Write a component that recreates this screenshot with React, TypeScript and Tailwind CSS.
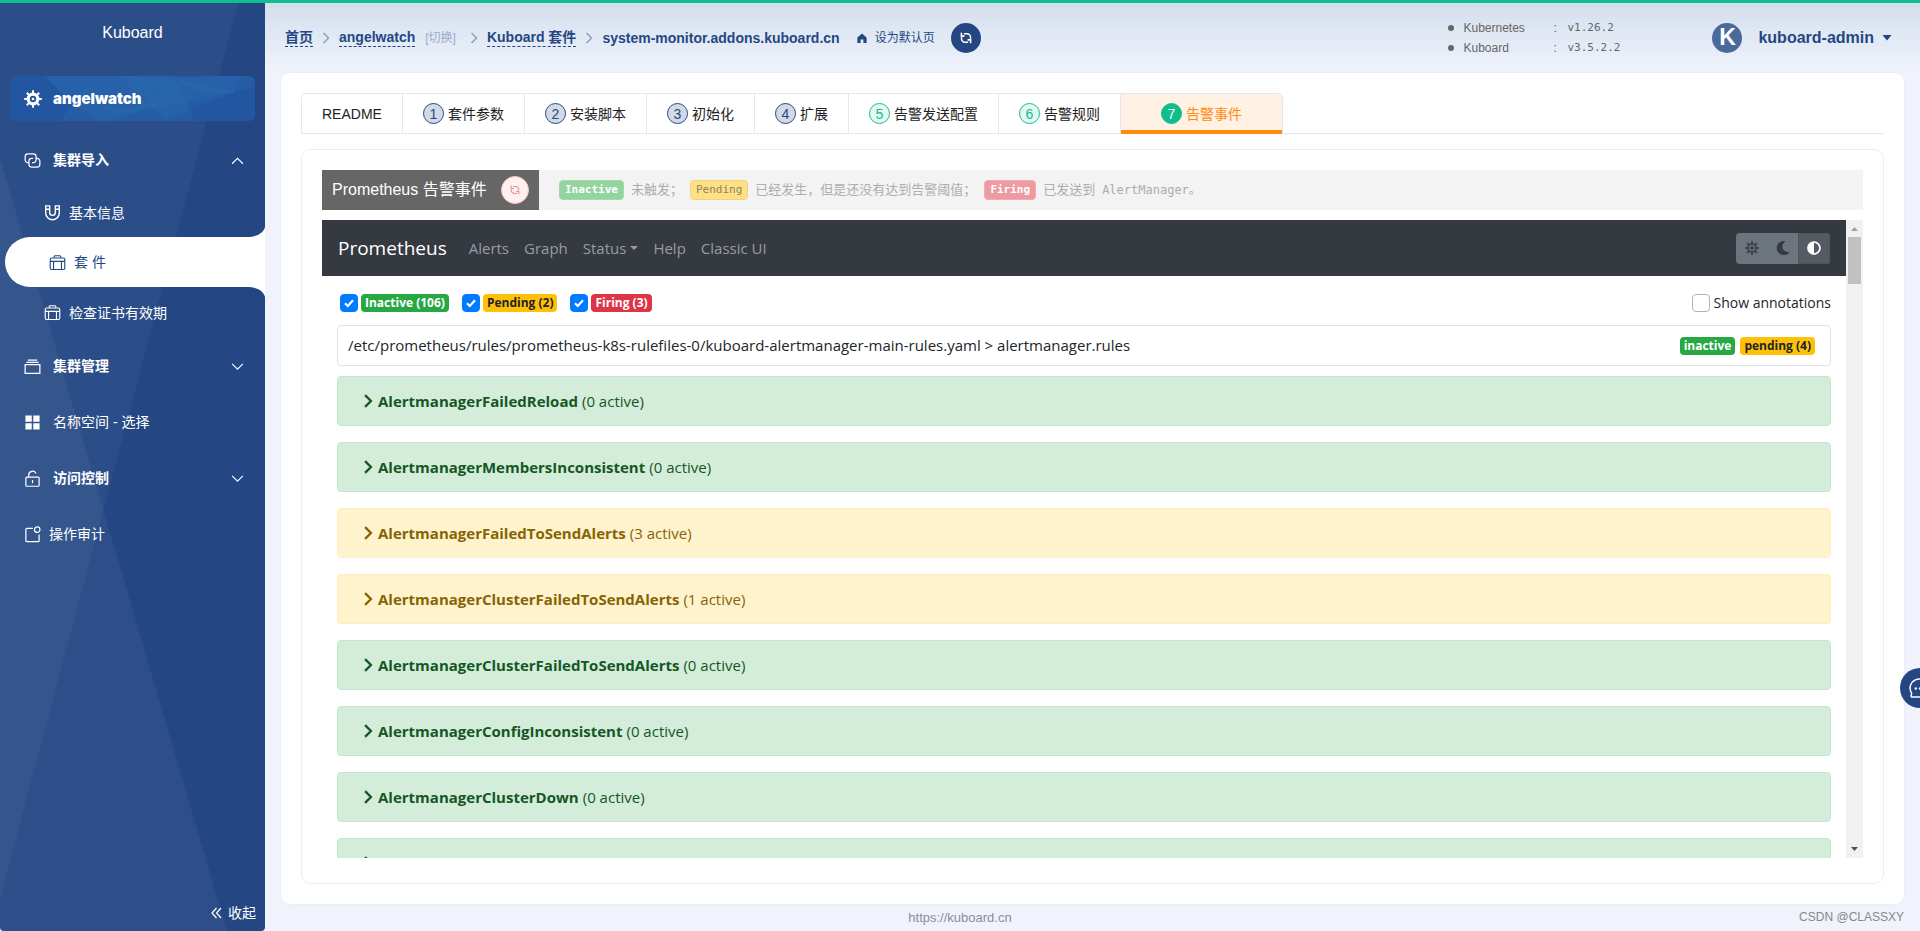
import { useState, type ReactNode } from "react";
import { FaAdjust, FaMoon } from "react-icons/fa";

type IconProps = { className?: string };

function HelmIcon({ className }: IconProps) {
  return (
    <svg viewBox="0 0 18 18" className={className} fill="none" stroke="currentColor">
      <circle cx="9" cy="9" r="4.8" strokeWidth="3.2" />
      <circle cx="9" cy="9" r="1.3" fill="currentColor" stroke="none" />
      <path
        strokeWidth="2"
        d="M9 0.2v4M9 13.8v4M0.2 9h4M13.8 9h4M2.8 2.8l2.4 2.4M12.8 12.8l2.4 2.4M2.8 15.2l2.4-2.4M12.8 5.2l2.4-2.4"
      />
    </svg>
  );
}

function ConnectionIcon({ className }: IconProps) {
  return (
    <svg viewBox="0 0 18 18" className={className} fill="none" stroke="currentColor" strokeWidth="1.3">
      <path d="M5.500 11.300H4.200A3 3 0 0 1 1.200 8.300V5a3 3 0 0 1 3-3h5.600a3 3 0 0 1 3 3v3.300a3 3 0 0 1-3 3H8.500" />
      <path d="M12.500 6.700h1.300a3 3 0 0 1 3 3V13a3 3 0 0 1-3 3H8.200a3 3 0 0 1-3-3V9.700a3 3 0 0 1 3-3h1.300" />
    </svg>
  );
}

function MagnetIcon({ className }: IconProps) {
  return (
    <svg viewBox="0 0 18 18" className={className} fill="none" stroke="currentColor" strokeWidth="1.5">
      <path d="M1.800 2v7.500a7.200 7.200 0 0 0 14.400 0V2h-4.200v7a3 3 0 0 1-6 0V2zM1.800 5.500H6M12 5.500h4.200" />
    </svg>
  );
}

function SuitcaseIcon({ className }: IconProps) {
  return (
    <svg viewBox="0 0 18 18" className={className} fill="none" stroke="currentColor" strokeWidth="1.200">
      <rect x="1.300" y="4.200" width="15.400" height="12.200" rx="1.500" />
      <path d="M1.300 7.800h15.400M4.800 7.800v8.600M13.200 7.800v8.600M5.500 4V2.800a1 1 0 0 1 1-1h5a1 1 0 0 1 1 1V4" />
    </svg>
  );
}

function StackIcon({ className }: IconProps) {
  return (
    <svg viewBox="0 0 18 18" className={className} fill="none" stroke="currentColor" strokeWidth="1.300">
      <path d="M1.200 7h15.600v9.200H1.200zM2.500 4.700h13M4 2.300h10" />
    </svg>
  );
}

function GridIcon({ className }: IconProps) {
  return (
    <svg viewBox="0 0 18 18" className={className} fill="currentColor">
      <path d="M1.500 1.500h6.700v6.700H1.500zM9.800 1.500h6.700v6.700H9.800zM1.500 9.800h6.700v6.700H1.500zM9.800 9.800h6.700v6.700H9.800z" />
    </svg>
  );
}

function UnlockIcon({ className }: IconProps) {
  return (
    <svg viewBox="0 0 18 18" className={className} fill="none" stroke="currentColor" strokeWidth="1.300">
      <rect x="2" y="7.500" width="14" height="9.700" rx="1" />
      <path d="M5 7.500V5.200a4 4 0 0 1 7.700-1.400M9 10.500v3.500" />
    </svg>
  );
}

function AuditIcon({ className }: IconProps) {
  return (
    <svg viewBox="0 0 18 18" className={className} fill="none" stroke="currentColor" strokeWidth="1.300">
      <path d="M9.500 2.500H3a1 1 0 0 0-1 1v12a1 1 0 0 0 1 1h12a1 1 0 0 0 1-1V9" />
      <circle cx="14" cy="3.900" r="2.900" />
    </svg>
  );
}

function RefreshIcon({ className, thick }: IconProps & { thick?: boolean }) {
  return (
    <svg
      viewBox="0 0 14 14"
      className={className}
      fill="none"
      stroke="currentColor"
      strokeWidth={thick ? 1.8 : 1.3}
    >
      <path d="M4.500 2.100H8A4.300 4.300 0 0 1 12.300 6.400V8M9.500 11.900H6A4.300 4.300 0 0 1 1.700 7.600V6" />
      <path d="M1.600 1v3.800h3.600M12.400 13V9.200H8.800" />
    </svg>
  );
}

function SunIcon({ className }: IconProps) {
  return (
    <svg viewBox="0 0 14 14" className={className} fill="none" stroke="currentColor" strokeWidth="1.500">
      <circle cx="7" cy="7" r="4" />
      <circle cx="7" cy="7" r="1.800" fill="currentColor" stroke="none" />
      <path d="M7 0v3M7 11v3M0 7h3M11 7h3M2 2l2 2M10 10l2 2M2 12l2-2M10 4l2-2" />
    </svg>
  );
}

function Chevron({ className, direction }: IconProps & { direction: "up" | "down" | "right" }) {
  const d = {
    up: "M1 9l5-5 5 5",
    down: "M1 3.500l5 5 5-5",
    right: "M3.500 1l5 5-5 5",
  }[direction];
  return (
    <svg viewBox="0 0 12 12" className={className} fill="none" stroke="currentColor">
      <path d={d} />
    </svg>
  );
}

const menuTail = [
  { label: "集群管理", Icon: StackIcon, bold: true },
  { label: "名称空间 - 选择", Icon: GridIcon, bold: false },
  { label: "访问控制", Icon: UnlockIcon, bold: true },
];

function Sidebar() {
  return (
    <aside className="relative flex w-[265px] shrink-0 flex-col overflow-hidden rounded-b-sm bg-[#244784] text-sm text-white">
      <svg
        className="absolute inset-0 size-full"
        viewBox="0 0 265 928"
        preserveAspectRatio="none"
        fill="#fff"
        fillOpacity="0.04"
        aria-hidden="true"
      >
        <path d="M0 0H238L0 896z" />
        <path d="M0 155L227 928H0z" fillOpacity="0.045" />
      </svg>
      <div className="relative flex flex-1 flex-col">
        <h1 className="pt-[18px] pb-[31px] text-center text-base leading-6">Kuboard</h1>
        <a
          href="#cluster"
          className="relative mx-2.5 mb-[11px] flex h-[45px] items-center gap-[11px] overflow-hidden rounded-md bg-[#2256a1] pl-3.5"
        >
          <svg
            className="absolute inset-0 size-full"
            viewBox="0 0 245 45"
            preserveAspectRatio="none"
            fill="#3f94cc"
            fillOpacity="0.1"
            aria-hidden="true"
          >
            <path d="M35 0H105L60 26zM105 0H167L132 24z" />
            <path d="M105 0L74 14L50 45H100L140 30z" />
            <path d="M165 2L230 0L225 18L185 14z" />
            <path d="M165 2L110 0L155 44L225 16z" />
            <path d="M60 26L120 34L165 2L185 45H90z" />
            <path d="M35 0H230L225 16L120 38L60 26z" />
            <path d="M229 0L227 16L245 10V0z" />
          </svg>
          <HelmIcon className="relative size-[18px]" />
          <span className="relative font-['Inter',sans-serif] text-[15px] font-black">angelwatch</span>
        </a>
        <nav className="flex flex-col">
          <button type="button" className="flex h-14 items-center pr-[21px] pl-6 font-bold">
            <ConnectionIcon className="mr-3 size-[17px]" />
            集群导入
            <Chevron direction="up" className="ml-auto size-[13px]" />
          </button>
          <a href="#info" className="flex h-[49px] items-center pl-11">
            <MagnetIcon className="mr-2 size-[17px]" />
            基本信息
          </a>
          <a
            href="#addons"
            aria-current="page"
            className="relative ml-[5px] flex h-[50px] items-center rounded-l-[25px] bg-white pl-11 text-[#244784]"
          >
            <svg className="absolute right-0 bottom-full h-2.5 w-[18px]" viewBox="0 0 18 10" fill="#fff" aria-hidden="true">
              <path d="M18 0V10H0C11 10 17 5 18 0z" />
            </svg>
            <SuitcaseIcon className="mr-2 size-[17px]" />
            套 件
            <svg className="absolute top-full right-0 h-2.5 w-[18px]" viewBox="0 0 18 10" fill="#fff" aria-hidden="true">
              <path d="M18 10V0H0C11 0 17 5 18 10z" />
            </svg>
          </a>
          <a href="#certs" className="flex h-[51px] items-center pl-11">
            <SuitcaseIcon className="mr-2 size-[17px]" />
            检查证书有效期
          </a>
          {menuTail.map(({ label, Icon, bold }) =>
            bold ? (
              <button key={label} type="button" className="flex h-14 items-center pr-[21px] pl-6 font-bold">
                <Icon className="mr-3 size-[17px]" />
                {label}
                <Chevron direction="down" className="ml-auto size-[13px]" />
              </button>
            ) : (
              <a key={label} href="#namespaces" className="flex h-14 items-center pl-6">
                <Icon className="mr-3 size-[17px]" />
                {label}
              </a>
            ),
          )}
          <a href="#audit" className="flex h-14 items-center pl-6">
            <AuditIcon className="mr-2 size-[17px]" />
            操作审计
          </a>
        </nav>
        <button type="button" className="mt-auto flex items-center gap-1.5 self-end pr-[9px] pb-2">
          <svg viewBox="0 0 11 12" className="h-3 w-[11px]" fill="none" stroke="currentColor" strokeWidth="1.2" aria-hidden="true">
            <path d="M5.500 1L1 6l4.500 5M10 1L5.500 6l4.500 5" />
          </svg>
          收起
        </button>
      </div>
    </aside>
  );
}

function Crumb({ href, children }: { href: string; children: ReactNode }) {
  return (
    <a href={href} className="border-b border-dashed border-[#244784] leading-[17px]">
      {children}
    </a>
  );
}

function Separator({ className }: IconProps) {
  return (
    <span className={className}>
      <Chevron direction="right" className="size-3 stroke-[1.500] text-[#8ea1c2]" />
    </span>
  );
}

function Header() {
  return (
    <header className="flex h-[69px] shrink-0 items-center bg-linear-to-b from-[#d3dfec] to-[#f0f3fc] pr-7 pl-5 text-[#244784]">
      <div className="flex items-center text-sm font-bold">
        <Crumb href="#home">首页</Crumb>
        <Separator className="mx-[7px]" />
        <Crumb href="#cluster">angelwatch</Crumb>
        <a href="#switch" className="ml-2.5 text-xs font-normal text-[#9aabc9]">
          [切换]
        </a>
        <Separator className="mr-[7px] ml-3" />
        <Crumb href="#addons">Kuboard 套件</Crumb>
        <Separator className="mx-[7px]" />
        <span>system-monitor.addons.kuboard.cn</span>
        <button type="button" className="ml-4 flex items-center gap-[7px] text-xs font-normal">
          <svg viewBox="0 0 12 12" className="size-3" fill="currentColor" aria-hidden="true">
            <path d="M6 1.500L10.600 5.500V11H7.400V7.500H4.600V11H1.400V5.500z" />
          </svg>
          设为默认页
        </button>
        <button
          type="button"
          aria-label="刷新"
          className="ml-4 flex size-[30px] items-center justify-center rounded-full bg-[#244784] text-white"
        >
          <RefreshIcon className="size-3" thick />
        </button>
      </div>
      <div className="ml-auto flex items-center">
        <ul className="mr-[92px] text-xs leading-5 text-[#666]">
          {[
            ["Kubernetes", "v1.26.2"],
            ["Kuboard", "v3.5.2.2"],
          ].map(([name, version]) => (
            <li key={name} className="flex items-center">
              <span className="mr-[9px] size-1.5 rounded-full bg-[#666]" />
              <span className="w-[90px]">{name}</span>
              <span className="w-3.5">:</span>
              <span className="font-['DejaVu_Sans_Mono',monospace] text-[11px]">{version}</span>
            </li>
          ))}
        </ul>
        <button type="button" className="flex items-center text-base font-bold">
          <span className="mr-4 flex size-[30px] items-center justify-center rounded-full bg-[#4a6a9c] text-[23px] leading-none text-white">
            K
          </span>
          kuboard-admin
          <svg viewBox="0 0 10 6" className="ml-2 h-1.5 w-2.5" fill="currentColor" aria-hidden="true">
            <path d="M0.500 0h9L5 5.500z" />
          </svg>
        </button>
      </div>
    </header>
  );
}

const tabs = [
  { label: "README" },
  { label: "套件参数", step: 1 },
  { label: "安装脚本", step: 2 },
  { label: "初始化", step: 3 },
  { label: "扩展", step: 4 },
  { label: "告警发送配置", step: 5 },
  { label: "告警规则", step: 6 },
  { label: "告警事件", step: 7 },
];

function stepStyle(step: number) {
  if (step === 7) return "border-[#10bd8f] bg-[#10bd8f] text-white";
  if (step > 4) return "border-[#10bd8f] bg-[#e5f8f2] text-[#10bd8f]";
  return "border-[#244784] bg-[#d3dae6] text-[#244784]";
}

function TabBar() {
  return (
    <div role="tablist" className="flex border-b border-[#e4e7ed]">
      <div className="-mb-px flex rounded-t border border-[#e4e7ed] text-sm text-[#222]">
        {tabs.map(({ label, step }) => {
          const active = step === 7;
          return (
            <button
              key={label}
              type="button"
              role="tab"
              aria-selected={active}
              className={
                active
                  ? "-mb-px flex h-10 items-center gap-1 border-b-4 border-[#ff8a0d] bg-[#fff1e3] px-10 pt-[3px] text-[#ff8a0d]"
                  : "flex h-[39px] items-center gap-1 border-r border-[#e4e7ed] px-5"
              }
            >
              {step && (
                <span
                  className={`flex size-[21px] items-center justify-center rounded-full border ${stepStyle(step)}`}
                >
                  {step}
                </span>
              )}
              {label}
            </button>
          );
        })}
      </div>
    </div>
  );
}

function StateTag({ className, children }: { className: string; children: ReactNode }) {
  return (
    <span
      className={`mr-[7px] flex h-5 items-center rounded border px-[5px] font-['DejaVu_Sans_Mono',monospace] text-[11px] ${className}`}
    >
      {children}
    </span>
  );
}

function Legend() {
  return (
    <div className="flex h-10 shrink-0 bg-[#f3f3f3]">
      <div className="flex w-[217px] items-center justify-between bg-[#666] px-2.5 text-base text-white">
        Prometheus 告警事件
        <button
          type="button"
          aria-label="刷新告警"
          className="flex size-7 items-center justify-center rounded-full border border-[#fbc4c4] bg-[#fef0f0] text-[#f56c6c]"
        >
          <RefreshIcon className="size-2.5" />
        </button>
      </div>
      <div className="flex items-center pl-5 text-[13px] text-[#adadad]">
        <StateTag className="border-[#a5dba0] bg-[#94d3a2] font-bold text-white">Inactive</StateTag>
        <span className="mr-[7px]">未触发；</span>
        <StateTag className="border-[#f6d08a] bg-[#ffe083] text-[#8c826a]">Pending</StateTag>
        <span className="mr-2">已经发生，但是还没有达到告警阈值；</span>
        <StateTag className="border-[#f5a8ae] bg-[#ee9aa2] font-bold text-white">Firing</StateTag>
        <span className="mr-[7px]">已发送到</span>
        <span className="font-['DejaVu_Sans_Mono','Noto_Sans_CJK_SC',monospace] text-xs">AlertManager。</span>
      </div>
    </div>
  );
}

function FilterBox({ id, label, badge }: { id: string; label: string; badge: string }) {
  const [checked, setChecked] = useState(true);
  return (
    <div className="flex items-center gap-[3px]">
      <span className="relative flex">
        <input
          id={id}
          type="checkbox"
          checked={checked}
          onChange={(event) => setChecked(event.target.checked)}
          className="size-[18px] appearance-none rounded border border-[#adb5bd] bg-white checked:border-[#007bff] checked:bg-[#007bff]"
        />
        {checked && (
          <svg
            viewBox="0 0 18 18"
            className="pointer-events-none absolute inset-0 size-[18px]"
            fill="none"
            stroke="#fff"
            strokeWidth="2.200"
            aria-hidden="true"
          >
            <path d="M5 9.300l2.800 2.700 5.200-5.700" />
          </svg>
        )}
      </span>
      <label htmlFor={id} className={`h-[18px] rounded px-1 text-xs leading-[18px] font-bold ${badge}`}>
        {label}
      </label>
    </div>
  );
}

const alerts = [
  { name: "AlertmanagerFailedReload", count: 0 },
  { name: "AlertmanagerMembersInconsistent", count: 0 },
  { name: "AlertmanagerFailedToSendAlerts", count: 3 },
  { name: "AlertmanagerClusterFailedToSendAlerts", count: 1 },
  { name: "AlertmanagerClusterFailedToSendAlerts", count: 0 },
  { name: "AlertmanagerConfigInconsistent", count: 0 },
  { name: "AlertmanagerClusterDown", count: 0 },
  { name: "AlertmanagerClusterCrashlooping", count: 0 },
];

function PrometheusView() {
  return (
    <div className="mt-2.5 flex min-h-0 flex-1 font-['Open_Sans',sans-serif] text-[15px]">
      <div className="min-w-0 flex-1 overflow-hidden">
        <div className="flex h-14 items-center bg-[#343a40] px-4 text-[#9a9da0]">
          <a href="#prometheus" className="mr-[22px] text-[19px] text-white">
            Prometheus
          </a>
          <nav className="flex items-center gap-[15px]">
            <a href="#alerts">Alerts</a>
            <a href="#graph">Graph</a>
            <button type="button" className="flex items-center gap-1">
              Status
              <svg viewBox="0 0 8 4" className="h-1 w-2" fill="currentColor" aria-hidden="true">
                <path d="M0 0h8L4 4z" />
              </svg>
            </button>
            <a href="#help">Help</a>
            <a href="#classic">Classic UI</a>
          </nav>
          <div className="ml-auto flex h-[31px] overflow-hidden rounded bg-[#6c757d] text-[#343a40]">
            <button type="button" aria-label="Light" className="flex w-8 items-center justify-center">
              <SunIcon className="size-3.5" />
            </button>
            <button type="button" aria-label="Dark" className="flex w-[30px] items-center justify-center">
              <FaMoon className="size-3.5" />
            </button>
            <button
              type="button"
              aria-label="Auto"
              className="flex w-8 items-center justify-center border border-[#4e555b] bg-[#545b62] text-white"
            >
              <FaAdjust className="size-3.5" />
            </button>
          </div>
        </div>
        <div className="px-[15px]">
          <div className="flex items-center gap-[13px] pt-[18px] pb-[13px] pl-[3px]">
            <FilterBox id="inactive" label="Inactive (106)" badge="bg-[#28a745] text-white" />
            <FilterBox id="pending" label="Pending (2)" badge="bg-[#ffc107] text-[#212529]" />
            <FilterBox id="firing" label="Firing (3)" badge="bg-[#dc3545] text-white" />
            <div className="ml-auto flex items-center gap-[3px] text-sm leading-[18px] text-[#212529]">
              <input
                id="annotations"
                type="checkbox"
                className="size-[18px] appearance-none rounded border border-[#adb5bd] bg-white checked:bg-[#007bff]"
              />
              <label htmlFor="annotations">Show annotations</label>
            </div>
          </div>
          <div className="mb-2.5 flex h-[41px] items-center rounded border border-[#dee2e6] pr-[15px] pl-2.5 text-[#212529]">
            /etc/prometheus/rules/prometheus-k8s-rulefiles-0/kuboard-alertmanager-main-rules.yaml &gt; alertmanager.rules
            <div className="ml-auto flex gap-[5px] text-xs leading-[18px] font-bold">
              <span className="rounded bg-[#28a745] px-1 text-white">inactive</span>
              <span className="rounded bg-[#ffc107] px-1">pending (4)</span>
            </div>
          </div>
          <div className="flex flex-col gap-4">
            {alerts.map(({ name, count }, index) => (
              <button
                key={index}
                type="button"
                className={`flex h-[50px] items-center rounded border pl-[23px] ${
                  count > 0
                    ? "border-[#ffeeba] bg-[#fff3cd] text-[#856404]"
                    : "border-[#c3e6cb] bg-[#d4edda] text-[#155724]"
                }`}
              >
                <Chevron direction="right" className="mr-[3px] size-3.5 stroke-2" />
                <strong className="mr-1">{name}</strong>({count} active)
              </button>
            ))}
          </div>
        </div>
      </div>
      <div className="flex w-[17px] shrink-0 flex-col items-center bg-[#f1f1f1]" aria-hidden="true">
        <svg viewBox="0 0 17 17" className="size-[17px]" fill="#a3a3a3">
          <path d="M5 11h7L8.500 7z" />
        </svg>
        <div className="h-[47px] w-[13px] bg-[#c1c1c1]" />
        <svg viewBox="0 0 17 17" className="mt-auto size-[17px]" fill="#505050">
          <path d="M5 6h7l-3.500 4z" />
        </svg>
      </div>
    </div>
  );
}

export default function App() {
  return (
    <div className="relative flex h-screen flex-col overflow-hidden border-t-[3px] border-[#10bd8f] bg-[#f0f3fc] font-['Liberation_Sans','Noto_Sans_CJK_SC',sans-serif]">
      <div className="flex min-h-0 flex-1">
        <Sidebar />
        <div className="flex min-w-0 flex-1 flex-col">
          <Header />
          <main className="mx-[15px] flex min-h-0 flex-1 flex-col rounded-[10px] border border-[#ebeef8] bg-white p-5">
            <TabBar />
            <section className="mt-[15px] flex min-h-0 flex-1 flex-col rounded-[10px] border border-[#ebeef8] px-5 pt-5 pb-[25px]">
              <Legend />
              <PrometheusView />
            </section>
          </main>
          <footer className="pr-[265px] text-center text-[13px] leading-[26px] text-[#8a8f99]">
            <a href="#kuboard">https://kuboard.cn</a>
          </footer>
        </div>
      </div>
      <button
        type="button"
        aria-label="联系我们"
        className="absolute top-[665px] -right-5 flex size-10 items-center rounded-full bg-[#244784] pl-[9px] text-white"
      >
        <svg viewBox="0 0 22 22" className="size-[22px]" fill="none" stroke="currentColor" strokeWidth="1.500">
          <path d="M2 20l.6-4A9 9 0 1 1 11 20H2" />
          <circle cx="6.800" cy="11.500" r="1.200" fill="currentColor" stroke="none" />
          <circle cx="11" cy="11.500" r="1.200" fill="currentColor" stroke="none" />
          <circle cx="15.200" cy="11.500" r="1.200" fill="currentColor" stroke="none" />
        </svg>
      </button>
      <span className="absolute right-4 bottom-1.5 text-xs text-[#888]">CSDN @CLASSXY</span>
    </div>
  );
}
